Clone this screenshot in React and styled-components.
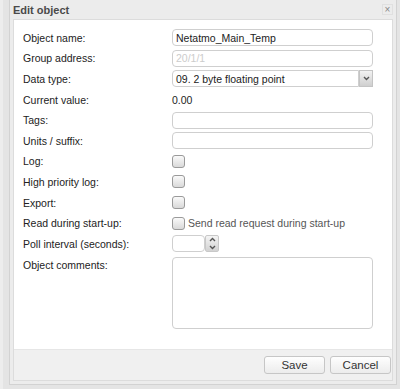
import React from 'react'
import styled, { createGlobalStyle } from 'styled-components'

const Global = createGlobalStyle`
  html, body { margin: 0; padding: 0; }
  body {
    background: #e4e4e4;
    font-family: "Liberation Sans", Arial, sans-serif;
    width: 400px;
    height: 389px;
    overflow: hidden;
  }
`

const Page = styled.div`
  padding: 0 3px 0 6px;
  height: 389px;
  box-sizing: border-box;
  border-left: 3px solid #ededed;
`

const Dialog = styled.div`
  width: 388px;
  height: 385px;
  background: #ececec;
  border: 1px solid #d2d2d2;
  border-top: none;
  box-sizing: border-box;
  display: flex;
  flex-direction: column;
`

const TitleBar = styled.div`
  height: 19px;
  display: flex;
  align-items: center;
  justify-content: space-between;
  padding: 0 3px 0 3px;
  font-size: 11px;
  font-weight: bold;
  color: #4a4a4a;
`

const Close = styled.div`
  width: 9px;
  height: 9px;
  border: 1px solid #e0e0e0;
  color: #888;
  font-size: 10px;
  line-height: 9px;
  text-align: center;
  font-weight: normal;
`

const Body = styled.div`
  flex: 1;
  margin: 0 3px 3px 3px;
  background: #fff;
  border: 1px solid #dcdcdc;
  display: flex;
  flex-direction: column;
`

const Form = styled.div`
  flex: 1;
  padding: 9px 0 0 9px;
  display: flex;
  flex-direction: column;
  gap: 3px;
`

const Row = styled.div`
  display: grid;
  grid-template-columns: 149px 1fr;
  align-items: ${p => (p.top ? 'start' : 'center')};
  min-height: 17.6px;
`

const Label = styled.div`
  font-size: 10.5px;
  color: #222;
  padding-top: ${p => (p.top ? '3px' : '0')};
`

const Input = styled.div`
  width: 201px;
  height: 17px;
  box-sizing: border-box;
  border: 1px solid #cfcfcf;
  border-radius: 4px;
  font-size: 10.5px;
  color: ${p => (p.disabled ? '#ccc' : '#222')};
  padding: 0 3px;
  display: flex;
  align-items: center;
`

const SelectWrap = styled.div`
  display: flex;
  width: 201px;
`

const Select = styled(Input)`
  width: 188px;
  border-radius: 4px 0 0 4px;
`

const SelectBtn = styled.div`
  width: 14px;
  height: 17px;
  background: linear-gradient(#f2f2f2, #cfcfcf);
  border: 1px solid #c4c4c4;
  box-sizing: border-box;
  display: flex;
  align-items: center;
  justify-content: center;
`

const Value = styled.div`
  font-size: 10.5px;
  color: #222;
`

const Check = styled.div`
  width: 13px;
  height: 13px;
  box-sizing: border-box;
  border: 1px solid #9a9a9a;
  border-radius: 3px;
  background: linear-gradient(#fafafa, #d9d9d9);
`

const CheckLine = styled.div`
  display: flex;
  align-items: center;
  gap: 3px;
  font-size: 10.5px;
  color: #555;
`

const SpinWrap = styled.div`
  display: flex;
  align-items: center;
`

const SpinInput = styled(Input)`
  width: 33px;
`

const SpinBtn = styled.div`
  width: 14px;
  height: 17px;
  background: linear-gradient(#f4f4f4, #d2d2d2);
  border: 1px solid #c8c8c8;
  border-radius: 2px;
  box-sizing: border-box;
  display: flex;
  flex-direction: column;
  align-items: center;
  justify-content: space-around;
`

const TextArea = styled(Input)`
  height: 72px;
  margin-top: 1px;
`

const Footer = styled.div`
  height: 30px;
  border-top: 1px solid #e6e6e6;
  background: #f0f0f0;
  display: flex;
  justify-content: flex-end;
  align-items: center;
  gap: 5px;
  padding-right: 1px;
`

const Button = styled.div`
  width: 61px;
  height: 18px;
  box-sizing: border-box;
  border: 1px solid #c6c6c6;
  border-radius: 3px;
  background: linear-gradient(#fefefe, #ececec);
  font-size: 11.5px;
  color: #333;
  display: flex;
  align-items: center;
  justify-content: center;
`

const Chevron = ({ up }) => (
  <svg width="7" height="5" viewBox="0 0 7 5">
    <path
      d={up ? 'M1 4 L3.5 1.5 L6 4' : 'M1 1 L3.5 3.5 L6 1'}
      fill="none"
      stroke="#555"
      strokeWidth="1.4"
    />
  </svg>
)

export default function App() {
  return (
    <Page>
      <Global />
      <Dialog>
        <TitleBar>
          <span>Edit object</span>
          <Close>×</Close>
        </TitleBar>
        <Body>
          <Form>
            <Row>
              <Label>Object name:</Label>
              <Input>Netatmo_Main_Temp</Input>
            </Row>
            <Row>
              <Label>Group address:</Label>
              <Input disabled>20/1/1</Input>
            </Row>
            <Row>
              <Label>Data type:</Label>
              <SelectWrap>
                <Select>09. 2 byte floating point</Select>
                <SelectBtn><Chevron /></SelectBtn>
              </SelectWrap>
            </Row>
            <Row>
              <Label>Current value:</Label>
              <Value>0.00</Value>
            </Row>
            <Row>
              <Label>Tags:</Label>
              <Input />
            </Row>
            <Row>
              <Label>Units / suffix:</Label>
              <Input />
            </Row>
            <Row>
              <Label>Log:</Label>
              <Check />
            </Row>
            <Row>
              <Label>High priority log:</Label>
              <Check />
            </Row>
            <Row>
              <Label>Export:</Label>
              <Check />
            </Row>
            <Row>
              <Label>Read during start-up:</Label>
              <CheckLine><Check />Send read request during start-up</CheckLine>
            </Row>
            <Row>
              <Label>Poll interval (seconds):</Label>
              <SpinWrap>
                <SpinInput />
                <SpinBtn><Chevron up /><Chevron /></SpinBtn>
              </SpinWrap>
            </Row>
            <Row top>
              <Label top>Object comments:</Label>
              <TextArea />
            </Row>
          </Form>
          <Footer>
            <Button>Save</Button>
            <Button>Cancel</Button>
          </Footer>
        </Body>
      </Dialog>
    </Page>
  )
}
